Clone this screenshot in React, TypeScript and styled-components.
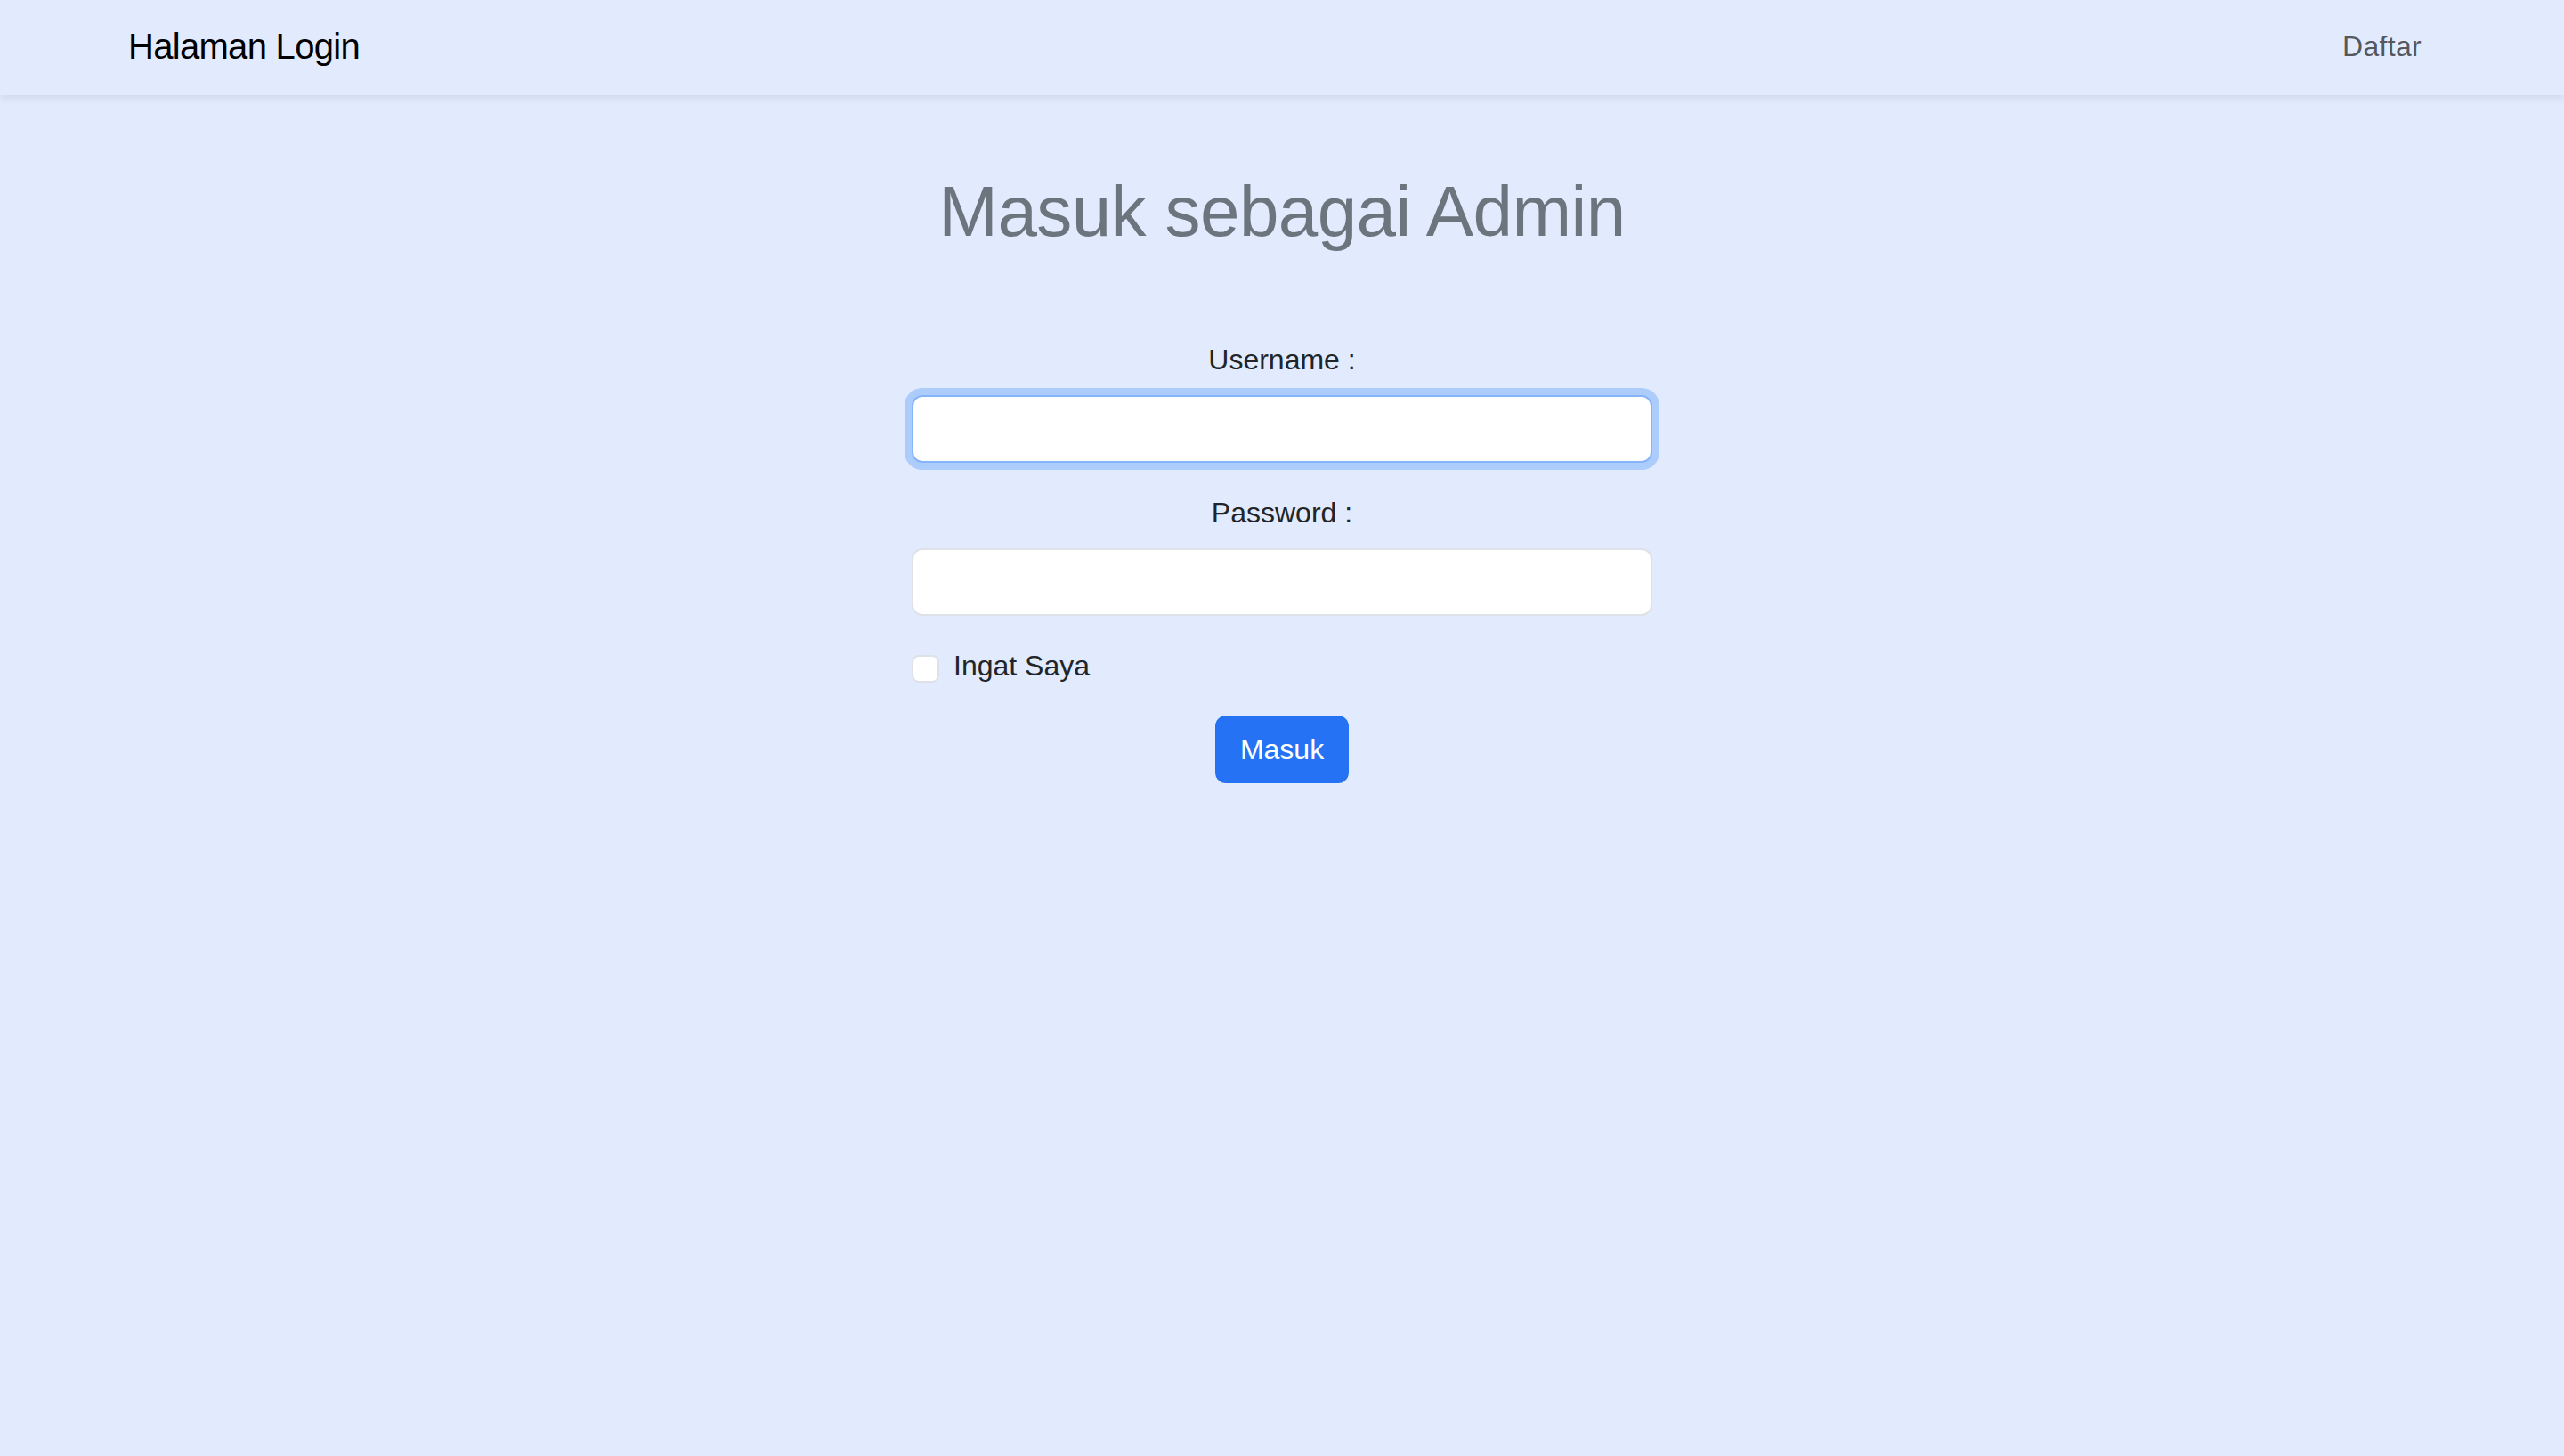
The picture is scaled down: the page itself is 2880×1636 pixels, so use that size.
import React from "react";
import styled, { createGlobalStyle, css } from "styled-components";

const GlobalStyle = createGlobalStyle`
  html, body {
    margin: 0;
    padding: 0;
  }
  body {
    background: #e2ebfd;
    font-family: "Liberation Sans", Arial, sans-serif;
    color: #212529;
    min-height: 100vh;
  }
  * { box-sizing: border-box; }
`;

const Page = styled.div`
  min-height: 1636px;
  background: #e2ebfd;
`;

const NavBar = styled.nav`
  height: 107px;
  background: #e2ebfd;
  box-shadow: 0 4px 8px rgba(0, 0, 0, 0.075);
  position: relative;
  z-index: 1;
`;

const NavInner = styled.div`
  max-width: 2640px;
  height: 100%;
  margin: 0 auto;
  padding: 0 24px 3px;
  display: flex;
  align-items: center;
  justify-content: space-between;
`;

const Brand = styled.a`
  font-size: 40px;
  line-height: 60px;
  color: #000;
  text-decoration: none;
  letter-spacing: -0.7px;
`;

const NavLink = styled.a`
  font-size: 32px;
  line-height: 48px;
  padding: 0 16px 0 0;
  color: rgba(0, 0, 0, 0.65);
  text-decoration: none;
  letter-spacing: 0.3px;
`;

const Main = styled.main`
  display: flex;
  flex-direction: column;
  align-items: center;
`;

const Title = styled.h1`
  margin: 83px 0 0;
  font-size: 80px;
  line-height: 96px;
  font-weight: 400;
  color: #6c757e;
  letter-spacing: -0.6px;
`;

const Form = styled.form`
  width: 832px;
  margin-top: 94px;
  display: flex;
  flex-direction: column;
`;

const Group = styled.div`
  display: flex;
  flex-direction: column;
  margin-bottom: 32px;
`;

const Label = styled.label`
  font-size: 32px;
  line-height: 48px;
  margin-bottom: 16px;
  text-align: center;
  color: #212529;
`;

const Input = styled.input<{ $focused?: boolean }>`
  height: 76px;
  width: 100%;
  padding: 12px 24px;
  font-size: 32px;
  font-family: inherit;
  background: #fff;
  border: 2px solid #dee2e6;
  border-radius: 12px;
  outline: none;
  ${(p) =>
    p.$focused &&
    css`
      border-color: #86b4fb;
      box-shadow: 0 0 0 8px rgba(13, 110, 253, 0.25);
    `}
`;

const CheckRow = styled.label`
  display: flex;
  align-items: flex-start;
  gap: 16px;
  min-height: 48px;
  margin-bottom: 32px;
  font-size: 32px;
  line-height: 48px;
  color: #212529;
`;

const CheckBox = styled.span`
  width: 31px;
  height: 31px;
  margin-top: 12px;
  background: #fff;
  border: 2px solid #dee2e6;
  border-radius: 8px;
  flex-shrink: 0;
`;

const ButtonRow = styled.div`
  display: flex;
  justify-content: center;
`;

const Button = styled.button`
  height: 76px;
  padding: 12px 26px;
  font-size: 32px;
  line-height: 48px;
  font-family: inherit;
  color: #fff;
  background: #2573f4;
  border: 2px solid #2573f4;
  border-radius: 12px;
  cursor: pointer;
`;

export default function App() {
  return (
    <>
      <GlobalStyle />
      <Page>
        <NavBar>
          <NavInner>
            <Brand href="#">Halaman Login</Brand>
            <NavLink href="#">Daftar</NavLink>
          </NavInner>
        </NavBar>
        <Main>
          <Title>Masuk sebagai Admin</Title>
          <Form onSubmit={(e) => e.preventDefault()}>
            <Group>
              <Label htmlFor="username">Username :</Label>
              <Input id="username" type="text" $focused />
            </Group>
            <Group>
              <Label htmlFor="password">Password :</Label>
              <Input id="password" type="password" />
            </Group>
            <CheckRow>
              <CheckBox />
              Ingat Saya
            </CheckRow>
            <ButtonRow>
              <Button type="submit">Masuk</Button>
            </ButtonRow>
          </Form>
        </Main>
      </Page>
    </>
  );
}
